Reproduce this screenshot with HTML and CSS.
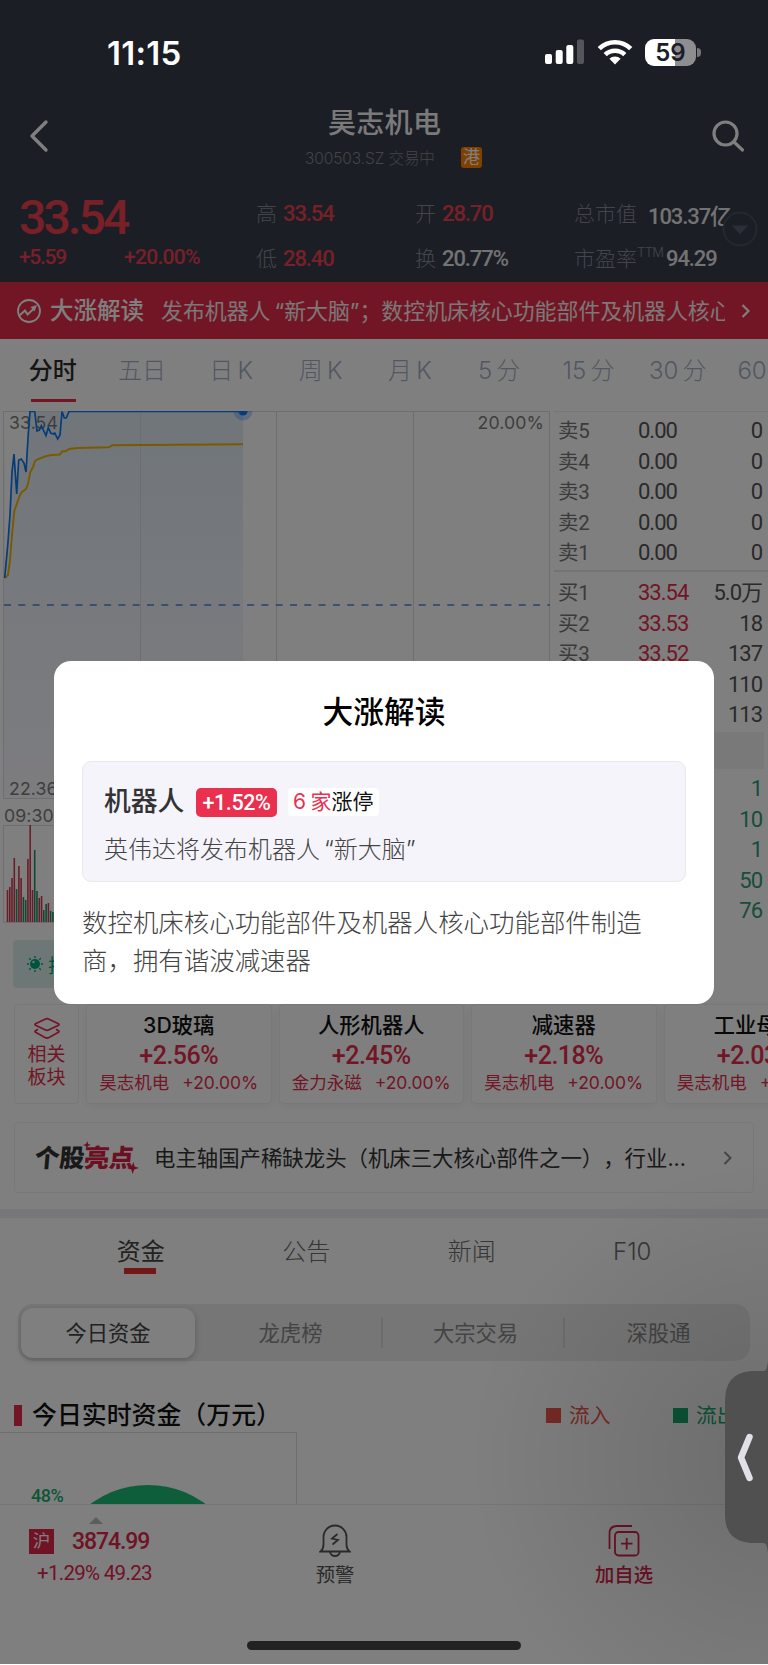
FILE: index.html
```html
<!DOCTYPE html>
<html lang="zh-CN">
  <head>
    <meta charset="UTF-8" />
    <meta name="viewport" content="width=device-width, initial-scale=1.0" />
    <title>昊志机电 300503.SZ</title>
    <link rel="stylesheet" href="styles.css">
  </head>

  <body>
    <!-- Status bar -->
    <div class="status-bar">
      <span class="clock">11:15</span>
      <div class="status-icons">
        <svg width="40" height="26" viewBox="0 0 40 26" fill="#fff">
          <rect x="0" y="15" width="7" height="10" rx="2" />
          <rect x="10.700" y="11" width="7" height="14" rx="2" />
          <rect x="21.300" y="6" width="7" height="19" rx="2" />
          <rect x="32" y="0.500" width="7" height="24.500" rx="2" opacity=".25" />
        </svg>
        <svg class="wifi" width="36" height="26" viewBox="0 0 36 26" fill="none" stroke="#fff" stroke-width="4.600">
          <path d="M2.300 9.600a22.500 22.500 0 0 1 31.400 0" />
          <path d="M8.200 15.700a14.200 14.200 0 0 1 19.600 0" />
          <path d="M18 25.500l-5.600-5.700a8 8 0 0 1 11.200 0z" fill="#fff" stroke="none" />
        </svg>
        <div class="battery"><span>59</span></div>
        <i class="battery-cap"></i>
      </div>
    </div>

    <header class="header">
      <div class="nav">
        <svg class="back" width="20" height="34" viewBox="0 0 20 34">
          <path d="M17 3L3 17l14 14" fill="none" stroke="#fff" stroke-width="3.400" stroke-linecap="round" stroke-linejoin="round" />
        </svg>
        <div class="stock">
          <h1>昊志机电</h1>
          <p><span>300503.SZ 交易中</span><b>港</b></p>
        </div>
        <svg class="search" width="34" height="34" viewBox="0 0 34 34" fill="none" stroke="#fff" stroke-width="3.200" stroke-linecap="round">
          <circle cx="14.500" cy="14.500" r="11.500" />
          <path d="M23 23l8.500 8" />
        </svg>
      </div>
      <div class="quote">
        <div class="price">
          <strong class="num">33.54</strong>
          <div class="change num"><span>+5.59</span><span>+20.00%</span></div>
        </div>
        <div class="pairs">
          <div><label>高</label><span class="num red">33.54</span></div>
          <div><label>低</label><span class="num red">28.40</span></div>
        </div>
        <div class="pairs">
          <div><label>开</label><span class="num red">28.70</span></div>
          <div><label>换</label><span class="num">20.77%</span></div>
        </div>
        <div class="pairs wide">
          <div><label>总市值</label><span class="num cap">103.37亿</span></div>
          <div><label>市盈率<sup>TTM</sup></label><span class="num">94.29</span></div>
        </div>
        <svg class="expand" width="36" height="36" viewBox="0 0 36 36">
          <circle cx="18" cy="18" r="16.500" fill="#363c49" stroke="#49505f" stroke-width="2" />
          <path d="M10 14.500h16l-8 9z" fill="#565d6c" />
        </svg>
      </div>
    </header>

    <div class="notice">
      <svg width="26" height="26" viewBox="0 0 26 26" fill="none" stroke="#fff" stroke-width="1.800">
        <circle cx="13" cy="13" r="11" />
        <path d="M3.500 17.500l5.500-5 2.500 4 6-5.500" stroke-width="2" />
        <path d="M14.500 9l6.500-2-2.500 6.500z" fill="#fff" stroke="none" />
      </svg>
      <b>大涨解读</b>
      <p>发布机器人<q class="open">“</q>新大脑<q>”</q>；数控机床核心功能部件及机器人核心功能部件制造商</p>
      <svg class="chev" width="10" height="16" viewBox="0 0 10 16" fill="none" stroke="#fff" stroke-width="2.200">
        <path d="M1.500 2l6 6-6 6" />
      </svg>
    </div>

    <nav class="periods">
      <a class="on">分时</a><a>五日</a><a>日 K</a><a>周 K</a><a>月 K</a><a>5 分</a><a>15 分</a><a>30 分</a><a>60 分</a>
    </nav>

    <div class="market">
      <div class="charts">
        <svg width="552" height="524" viewBox="0 411 552 524">
          <defs>
            <linearGradient id="area" x1="0" y1="0" x2="0" y2="1">
              <stop offset="0" stop-color="#e2ecf6" />
              <stop offset="1" stop-color="#fafaff" />
            </linearGradient>
            <clipPath id="plot"><rect x="3" y="411" width="549" height="390" /></clipPath>
          </defs>
          <rect x="4" y="411" width="239" height="387" fill="url(#area)" />
          <path d="M5 578L8 542 10 515 12 472 14 454 16.700 494 18.700 460 21 459 24 463 26 472 28 438 30 411H4z" fill="#fff" />
          <path d="M3.500 411.500h546v387H3.500zM140.500 411v387M276.500 411v387M413.500 411v387M3.500 825.500h546v97H3.500z" fill="none" stroke="#dcdce0" />
          <g class="chart-labels">
            <text x="9" y="428.500">33.54</text>
            <text x="544" y="428.500" text-anchor="end">20.00%</text>
            <text x="9" y="795">22.36</text>
            <text x="4" y="821.500">09:30</text>
          </g>
          <path d="M4 605h546" stroke="#4d86dc" stroke-width="1.300" stroke-dasharray="7 7.300" />
          <g clip-path="url(#plot)" fill="none">
            <path d="M5 578L8 575 10 560 12 535 14.300 511 20 495 22 492 26 489 28 484 30.300 472 33 467 35 461 38 459 45 456.500 50 455.300 60 454.500 62 451.500 66 451 69 449 77 448 109 447.300 112 445.300 243 444.300" stroke="#f0b400" stroke-width="1.900" />
            <path d="M4.700 578L8 542 10 515 12 472 14 454 16.700 494 18.700 460 21.300 459 24 463 26 472 28 438 30 411.500H34.700L37 431 39.300 430 41.300 425.700 46 435.700 48.300 427.700 50.700 433 53.300 434 54.700 433 57.700 439 60 435 62 411.500 64.300 418 66.300 418 69 411.500H243" stroke="#0c7af2" stroke-width="1.700" />
            <circle cx="243" cy="411" r="9.500" fill="#0c7af2" opacity=".28" />
            <circle cx="243" cy="411" r="4.600" fill="#0c7af2" />
          </g>
          <path d="M7.500 922v-32M9.800 922v-35M12 922v-44M14.300 922v-64M18.900 922v-56M21.100 922v-44M27.900 922v-63M30.200 922v-97M32.500 922v-32M39.300 922v-24M41.600 922v-26M48.400 922v-19" stroke="#d43a52" stroke-width="1.600" />
          <path d="M16.600 922v-33M23.400 922v-25M25.700 922v-22M34.700 922v-72M37 922v-31M43.800 922v-12M46.100 922v-18M50.600 922v-11M52.900 922v-10" stroke="#1f9268" stroke-width="1.600" />
        </svg>
      </div>
      <div class="book">
        <ul class="asks">
          <li><label>卖5</label><span>0.00</span><em>0</em></li>
          <li><label>卖4</label><span>0.00</span><em>0</em></li>
          <li><label>卖3</label><span>0.00</span><em>0</em></li>
          <li><label>卖2</label><span>0.00</span><em>0</em></li>
          <li><label>卖1</label><span>0.00</span><em>0</em></li>
        </ul>
        <ul class="bids">
          <li><label>买1</label><span>33.54</span><em>5.0万</em></li>
          <li><label>买2</label><span>33.53</span><em>18</em></li>
          <li><label>买3</label><span>33.52</span><em>137</em></li>
          <li><label>买4</label><span>33.51</span><em>110</em></li>
          <li><label>买5</label><span>33.50</span><em>113</em></li>
        </ul>
        <div class="book-bar"></div>
        <ul class="deals">
          <li><em>1</em></li>
          <li><em>10</em></li>
          <li><em>1</em></li>
          <li><em>50</em></li>
          <li><em>76</em></li>
        </ul>
      </div>
    </div>

    <div class="hint">
      <svg width="16" height="16" viewBox="0 0 16 16">
        <circle cx="8" cy="8" r="5" fill="#00a67e" />
        <path d="M8 0v2M8 14v2M0 8h2M14 8h2M2.200 2.200l1.500 1.500M12.300 12.300l1.500 1.500M13.800 2.200l-1.500 1.500M2.200 13.800l1.500-1.500" stroke="#00a67e" stroke-width="1.400" />
        <circle cx="6.500" cy="6" r="1.200" fill="#dff3ee" />
      </svg>
      <span>技术</span>
    </div>

    <div class="sectors">
      <div class="sector-head">
        <svg width="28" height="24" viewBox="0 0 28 24" fill="none" stroke="#e42d4a" stroke-width="1.800" stroke-linejoin="round">
          <path d="M12 2.200q2-1 4 0l9 4.300q2 1 0 2l-9 4.300q-2 1-4 0l-9-4.300q-2-1 0-2z" />
          <path d="M5 12.300l-2 1.200q-2 1 0 2l9 5q2 1 4 0l9-5q2-1 0-2l-2-1.200" />
        </svg>
        <span>相关</span>
        <span>板块</span>
      </div>
      <div class="sector"><h3>3D玻璃</h3><strong>+2.56%</strong><p>昊志机电<i>+20.00%</i></p></div>
      <div class="sector"><h3>人形机器人</h3><strong>+2.45%</strong><p>金力永磁<i>+20.00%</i></p></div>
      <div class="sector"><h3>减速器</h3><strong>+2.18%</strong><p>昊志机电<i>+20.00%</i></p></div>
      <div class="sector"><h3>工业母机</h3><strong>+2.03%</strong><p>昊志机电<i>+20.00%</i></p></div>
    </div>

    <div class="highlight">
      <div class="highlight-logo">
        个股<b>亮点</b>
        <svg class="spark-a" width="8" height="8" viewBox="0 0 8 8"><path d="M4 0l1 3 3 1-3 1-1 3-1-3-3-1 3-1z" fill="#d91f45" /></svg>
        <svg class="spark-b" width="12" height="12" viewBox="0 0 8 8"><path d="M4 0l1 3 3 1-3 1-1 3-1-3-3-1 3-1z" fill="#d91f45" /></svg>
      </div>
      <p>电主轴国产稀缺龙头（机床三大核心部件之一），行业...</p>
      <svg class="chev" width="10" height="16" viewBox="0 0 10 16" fill="none" stroke="#8a8a8a" stroke-width="2">
        <path d="M1.500 2l6 6-6 6" />
      </svg>
    </div>

    <div class="gap"></div>

    <nav class="info-tabs">
      <a class="on">资金</a><a>公告</a><a>新闻</a><a>F10</a>
    </nav>

    <div class="segments">
      <a class="on">今日资金</a><a>龙虎榜</a><a>大宗交易</a><a>深股通</a>
    </div>

    <div class="section-title">
      <h2>今日实时资金（万元）</h2>
      <span class="legend in">流入</span>
      <span class="legend out">流出</span>
    </div>

    <div class="donut">
      <span>48%</span>
      <svg width="200" height="72" viewBox="0 0 200 72">
        <circle cx="108" cy="148.500" r="96.500" fill="#1dbd76" />
      </svg>
    </div>

    <footer class="toolbar">
      <div class="index">
        <i class="tri"></i>
        <div><b>沪</b><span>3874.99</span></div>
        <p>+1.29% 49.23</p>
      </div>
      <div class="tool alert">
        <svg width="32" height="34" viewBox="0 0 32 34" fill="none" stroke="#555" stroke-width="1.800">
          <path d="M1.500 27.500q3-2.500 3-7V13a11.500 11.500 0 0 1 23 0v7.500q0 4.500 3 7zM11 28q1 4 5 4t5-4" />
          <path d="M18.500 10l-5.500 4.500 6 1.500-5.500 4.500" />
        </svg>
        <span>预警</span>
      </div>
      <div class="tool add">
        <svg width="32" height="34" viewBox="0 0 32 34" fill="none" stroke="#d42348" stroke-width="1.800">
          <path d="M24 2H9Q1.500 2 1.500 9.500V25" />
          <rect x="7" y="8" width="23.500" height="23.500" rx="3.500" />
          <path d="M18.700 14v11.500M13 19.700h11.500" />
        </svg>
        <span>加自选</span>
      </div>
    </footer>
    <div class="home-indicator"></div>

    <!-- Modal -->
    <div class="modal-overlay">
      <div class="modal-content">
        <h2>大涨解读</h2>
        <div class="topic">
          <div class="topic-head">
            <b>机器人</b>
            <span class="rise">+1.52%</span>
            <span class="limit"><i>6 家</i>涨停</span>
          </div>
          <p>英伟达将发布机器人<q class="open">“</q>新大脑<q>”</q></p>
        </div>
        <p class="desc">数控机床核心功能部件及机器人核心功能部件制造商，拥有谐波减速器</p>
      </div>
    </div>

    <!-- Side handle -->
    <div class="handle-shade"></div>
    <div class="side-handle">
      <svg width="44" height="192" viewBox="0 0 44 192">
        <path d="M44 0q-1 10-4 10H27Q1 12 1 40V154Q1 180 27 182H40q3 0 4 10z" fill="#505050" />
        <path d="M25.500 76L17 96.500 25.500 117" fill="none" stroke="#e0e0e6" stroke-width="6.500" stroke-linecap="round" stroke-linejoin="round" />
      </svg>
    </div>
  </body>
</html>
```

FILE: styles.css
```css
* {
  box-sizing: border-box;
}

body {
  position: relative;
  width: 768px;
  height: 1665px;
  margin: 0;
  overflow: hidden;
  background: #fff;
  font-family: Inter, "Noto Sans CJK SC", sans-serif;
  color: #333;
  text-spacing-trim: space-all;
}

h1, h2, h3, p, ul {
  margin: 0;
  padding: 0;
  font-weight: normal;
}

ul {
  list-style: none;
}

i, em {
  font-style: normal;
}

q {
  quotes: none;
  font-family: Inter, sans-serif;
}

q.open {
  margin-left: 4px;
}

svg {
  display: block;
  flex-shrink: 0;
}

.num {
  font-family: Roboto, "Noto Sans CJK SC", sans-serif;
  font-weight: 500;
  letter-spacing: -0.05em;
}

/* Status bar, stays bright above the overlay */
.status-bar {
  position: absolute;
  top: 0;
  left: 0;
  z-index: 20;
  width: 768px;
  height: 104px;
  display: flex;
  justify-content: space-between;
  align-items: center;
  padding: 0 67px 0 107px;
  color: #fff;
}

.clock {
  font-size: 33px;
  font-weight: 600;
  line-height: 36px;
  padding-top: 2px;
  letter-spacing: 0.3px;
}

.status-icons {
  display: flex;
  align-items: center;
}

.wifi {
  margin: 0 12px 0 12px;
}

.battery {
  width: 51px;
  height: 27px;
  border-radius: 9px;
  background: linear-gradient(90deg, #fff 59%, #8e8e91 59%);
  color: #1b1e26;
  font-size: 24px;
  font-weight: 600;
  line-height: 27px;
  text-align: center;
}

.battery-cap {
  width: 4px;
  height: 9px;
  margin-left: 1px;
  border-radius: 0 4px 4px 0;
  background: #77787c;
}

/* Header */
.header {
  height: 282px;
  padding-top: 104px;
  background: #363c4b;
  color: #fff;
}

.nav {
  height: 80px;
  display: grid;
  grid-template-columns: 276px 198px 1fr;
  padding: 0 23px 0 29px;
}

.nav > svg {
  margin-top: 15px;
}

.search {
  justify-self: end;
}

.stock h1 {
  padding-left: 23px;
  font-size: 28px;
  font-weight: 500;
  line-height: 38px;
  color: #f4f4f4;
  letter-spacing: 0.3px;
}

.stock p {
  display: flex;
  align-items: center;
  height: 30px;
  font-size: 15.500px;
  color: #86888c;
  white-space: nowrap;
}

.stock p span {
  width: 156px;
  font-weight: 300;
  letter-spacing: -0.100px;
}

.stock b {
  width: 21px;
  height: 21px;
  border-radius: 3px;
  background: #ff8000;
  color: #fff;
  font-size: 17px;
  font-weight: 400;
  line-height: 20px;
  text-align: center;
}

.quote {
  position: relative;
  display: grid;
  grid-template-columns: 237px 159px 159px 1fr;
  padding-left: 19px;
}

.price strong {
  display: block;
  height: 52px;
  font-size: 48px;
  font-weight: 500;
  line-height: 68px;
  letter-spacing: -2.800px;
  color: #f04050;
}

.change {
  display: flex;
  line-height: 43px;
  font-size: 21px;
  letter-spacing: -0.700px;
  color: #f04050;
}

.change span:first-child {
  width: 105px;
  letter-spacing: -1.300px;
}

.pairs {
  padding-top: 7px;
}

.pairs > div {
  display: flex;
  align-items: center;
  height: 45px;
  font-size: 22px;
  color: #e6e6e6;
  white-space: nowrap;
}

.pairs label {
  width: 27px;
  padding-bottom: 4px;
  font-size: 21px;
  font-weight: 300;
  color: #868b96;
}

.pairs .red {
  color: #f04050;
}

.pairs.wide label {
  flex-shrink: 0;
  width: 92px;
}

.pairs .cap {
  margin-left: -18px;
}

.pairs sup {
  font-size: 13px;
  line-height: 0;
  letter-spacing: -0.600px;
  vertical-align: 9px;
}

.expand {
  position: absolute;
  right: 10px;
  top: 27px;
}

/* Red notice strip */
.notice {
  display: flex;
  align-items: center;
  height: 57px;
  padding: 0 17px 0 16px;
  background: #e42d4a;
  color: #fff;
}

.notice b {
  margin: -3px 0 0 8px;
  font-size: 23.500px;
  font-weight: 500;
}

.notice p {
  flex: 1;
  margin: -3px 16px 0 17px;
  overflow: hidden;
  white-space: nowrap;
  font-size: 21.900px;
  color: #fbeef0;
}

/* Period tabs */
.periods {
  display: grid;
  grid-template-columns: repeat(8, 89.300px) auto;
  width: 860px;
  height: 72px;
  margin-left: 8px;
  line-height: 64px;
  text-align: center;
  font-size: 24px;
  font-weight: 300;
  word-spacing: -2.500px;
  color: #a4afc6;
}

.periods .on {
  position: relative;
  font-weight: 500;
  color: #2a2a2a;
}

.periods .on::after {
  content: "";
  position: absolute;
  left: 23px;
  top: 60px;
  width: 45px;
  height: 3px;
  background: #e42d4a;
}

.periods a:last-child {
  padding-left: 15px;
  text-align: left;
}

/* Chart and order book */
.market {
  display: flex;
  height: 524px;
}

.chart-labels {
  font-size: 17.700px;
  letter-spacing: 0.1px;
  fill: #7c7c7c;
}

.book {
  flex: 1;
  margin-left: 2px;
  border-top: 1px solid #ececee;
  font-family: Roboto, "Noto Sans CJK SC", sans-serif;
  font-size: 22px;
  font-weight: 500;
  letter-spacing: -1px;
}

.book li {
  display: grid;
  grid-template-columns: 80px 1fr auto;
  height: 30.500px;
  line-height: 30px;
  padding: 0 6px 0 4px;
  color: #555;
}

.book label {
  font-size: 20.500px;
  font-weight: 400;
  letter-spacing: -0.300px;
  color: #777;
}

.asks {
  padding-top: 4px;
  height: 160px;
  border-bottom: 2px solid #e6e6e9;
}

.bids {
  padding-top: 6px;
  height: 160px;
}

.bids span {
  color: #e42d4a;
}

.book-bar {
  height: 37px;
  margin: 0 4px 5px 0;
  background: #f2f2f4;
}

.book .deals li {
  display: block;
  text-align: right;
  color: #2f9a76;
}

.hint {
  display: flex;
  align-items: center;
  gap: 5px;
  width: 640px;
  height: 48px;
  margin: 5px 0 16px 13px;
  padding-left: 14px;
  border-radius: 4px;
  background: #dbefec;
  font-size: 19px;
  color: #00a67e;
}

/* Sector cards */
.sectors {
  display: flex;
  width: 860px;
  height: 100px;
  padding-left: 14px;
}

.sector-head {
  display: flex;
  flex-direction: column;
  align-items: center;
  width: 65px;
  padding-top: 12px;
  margin-right: 7px;
  border: 1px solid #f0f0f2;
  border-radius: 4px;
  font-size: 19px;
  line-height: 23px;
  color: #e42d4a;
}

.sector-head svg {
  margin-bottom: 2px;
}

.sector {
  flex: none;
  width: 185.500px;
  margin-right: 7px;
  border: 1px solid #f0f0f2;
  border-radius: 4px;
  box-shadow: 0 2px 8px rgba(0, 0, 40, 0.06);
  text-align: center;
  white-space: nowrap;
}

.sector h3 {
  padding-top: 4px;
  font-size: 21.300px;
  font-weight: 500;
  line-height: 32px;
  color: #111;
}

.sector strong {
  display: block;
  padding-top: 1px;
  font-family: Roboto, sans-serif;
  font-size: 25px;
  font-weight: 500;
  line-height: 28px;
  letter-spacing: -0.500px;
  color: #e42d4a;
}

.sector p {
  font-size: 17.500px;
  line-height: 26px;
  color: #e42d4a;
}

.sector p i {
  margin-left: 13px;
}

/* Highlight card */
.highlight {
  display: flex;
  align-items: center;
  width: 740px;
  height: 71px;
  margin: 18px 0 16px 14px;
  padding: 0 20px 0 20px;
  border: 1px solid #f0f0f2;
  border-radius: 4px;
}

.highlight-logo {
  position: relative;
  width: 119px;
  margin-top: -3px;
  font-size: 25px;
  font-weight: 900;
  letter-spacing: -0.300px;
  transform: skewX(-5deg);
  white-space: nowrap;
}

.highlight-logo b {
  font-weight: 900;
  color: #d91f45;
}

.spark-a {
  position: absolute;
  left: 47px;
  top: 3px;
}

.spark-b {
  position: absolute;
  left: 93px;
  top: 24px;
}

.highlight p {
  flex: 1;
  margin-top: -3px;
  font-size: 21.400px;
  white-space: nowrap;
}

.gap {
  height: 9px;
  background: #efeff5;
}

/* Info tabs */
.info-tabs {
  display: grid;
  grid-template-columns: repeat(4, 165.500px);
  height: 86px;
  padding-left: 58px;
  line-height: 67px;
  text-align: center;
  font-size: 24px;
  font-weight: 300;
  color: #6c6c6c;
}

.info-tabs .on {
  position: relative;
  font-weight: 400;
  color: #444;
}

.info-tabs .on::after {
  content: "";
  position: absolute;
  left: 66px;
  top: 50px;
  width: 32px;
  height: 6px;
  background: #e52f2f;
}

.info-tabs a:last-child {
  padding-right: 10px;
}

.segments {
  display: grid;
  grid-template-columns: 174px 188px 182px 1fr;
  align-items: center;
  width: 732px;
  height: 57px;
  margin-left: 18px;
  padding: 0 3px;
  border-radius: 15px;
  background: #ececee;
  text-align: center;
  font-size: 21.300px;
  line-height: 30px;
  color: #888;
}

.segments .on {
  border-radius: 12px;
  background: #fff;
  box-shadow: 0 2px 6px rgba(0, 0, 20, 0.22);
  color: #444;
  line-height: 50px;
}

.segments a:nth-child(n + 2) {
  padding-left: 5px;
}

.segments a:nth-child(2),
.segments a:nth-child(3) {
  border-right: 2px solid #d8d8dc;
}

/* Fund flow */
.section-title {
  display: flex;
  align-items: center;
  width: 800px;
  height: 71px;
  padding: 38px 0 0 14px;
}

.section-title h2 {
  width: 532px;
  padding-left: 10px;
  border-left: 8px solid #e42d4a;
  font-size: 24.900px;
  font-weight: 500;
  line-height: 21px;
  color: #111;
}

.legend {
  display: flex;
  align-items: center;
  gap: 8px;
  width: 127px;
  font-size: 20.700px;
  line-height: 24px;
}

.legend::before {
  content: "";
  width: 15px;
  height: 15px;
  background: currentColor;
}

.legend.in {
  color: #ec5548;
}

.legend.out {
  color: #12ad6c;
}

.donut {
  display: flex;
  width: 297px;
  height: 72px;
  overflow: hidden;
  border: 1px solid #dedee0;
  border-width: 1px 1px 0 0;
}

.donut span {
  width: 40px;
  padding-left: 31px;
  font-family: Roboto, sans-serif;
  font-size: 18px;
  font-weight: 500;
  line-height: 126px;
  letter-spacing: -0.500px;
  color: #1dab6f;
}

/* Bottom toolbar */
.toolbar {
  position: relative;
  display: flex;
  height: 160px;
  border-top: 1px solid #ececee;
}

.index {
  width: 319px;
  padding: 12px 0 0 29px;
  font-family: Roboto, "Noto Sans CJK SC", sans-serif;
  font-weight: 500;
  color: #e0264b;
}

.tri {
  display: block;
  width: 0;
  margin-left: 60px;
  border: 7px solid transparent;
  border-top: 0;
  border-bottom-color: #bbb;
}

.index div {
  display: flex;
  align-items: center;
  height: 35px;
}

.index b {
  width: 25px;
  height: 25px;
  margin-right: 18px;
  background: #e0264b;
  color: #fff;
  font-size: 17.500px;
  font-weight: 400;
  line-height: 24px;
  text-align: center;
}

.index span {
  font-size: 23px;
  letter-spacing: -1.100px;
}

.index p {
  padding-left: 8px;
  font-size: 20.500px;
  line-height: 29px;
  letter-spacing: -0.700px;
}

.tool {
  display: flex;
  flex-direction: column;
  align-items: center;
  width: 32px;
  padding-top: 19px;
  font-size: 19.300px;
  line-height: 34px;
  white-space: nowrap;
  color: #555;
}

.add {
  margin-left: 257px;
  font-weight: 500;
  color: #d42348;
}

.home-indicator {
  position: absolute;
  left: 247px;
  top: 1641px;
  z-index: 2;
  width: 274px;
  height: 9px;
  border-radius: 5px;
  background: #444;
}

/* Modal */
.modal-overlay {
  position: absolute;
  top: 0;
  left: 0;
  z-index: 10;
  width: 768px;
  height: 1664px;
  padding: 661px 54px 0;
  background: rgba(0, 0, 0, 0.5);
}

.modal-content {
  height: 343px;
  padding: 27px 28px 0;
  border-radius: 17px;
  background: #fff;
}

.modal-content h2 {
  margin-bottom: 25px;
  font-size: 30.700px;
  font-weight: 500;
  line-height: 48px;
  text-align: center;
  color: #000;
}

.topic {
  height: 121px;
  padding: 25px 21px 0;
  border: 1px solid #e9e8ee;
  border-radius: 9px;
  background: #f5f4fb;
}

.topic-head {
  display: flex;
  align-items: center;
  height: 30px;
}

.topic-head b {
  width: 92px;
  margin-top: -5px;
  font-size: 26.800px;
  font-weight: 500;
}

.rise {
  width: 81px;
  height: 29px;
  margin-right: 11px;
  border-radius: 5px;
  background: #e9304f;
  color: #fff;
  font-family: Roboto, sans-serif;
  font-size: 21.500px;
  font-weight: 500;
  line-height: 30px;
  letter-spacing: -0.400px;
  text-align: center;
}

.limit {
  width: 91px;
  height: 28px;
  padding-left: 5px;
  border-radius: 4px;
  background: #fff;
  font-size: 21px;
  line-height: 27px;
  white-space: nowrap;
  word-spacing: -1.500px;
  color: #111;
}

.limit i {
  color: #e9304f;
}

.topic p {
  margin-top: 15px;
  font-size: 24px;
  font-weight: 300;
  line-height: 36px;
  color: #444;
}

.desc {
  margin-top: 22px;
  font-size: 25.450px;
  font-weight: 300;
  line-height: 37.500px;
  color: #444;
}

/* Side handle */
.handle-shade {
  position: absolute;
  right: 0;
  top: 1140px;
  z-index: 11;
  width: 330px;
  height: 524px;
  background: radial-gradient(circle at 100% 320px, rgba(0, 0, 0, 0.15), transparent 300px);
}

.side-handle {
  position: absolute;
  right: 0;
  top: 1361px;
  z-index: 12;
}
```
